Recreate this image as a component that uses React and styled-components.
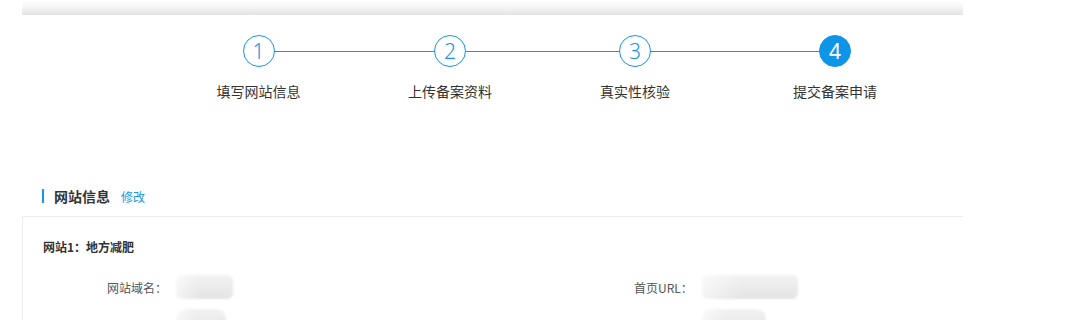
import React from "react"
import styled, { createGlobalStyle } from "styled-components"

const GlobalStyle = createGlobalStyle`
  html, body {
    margin: 0;
    padding: 0;
    background: #ffffff;
    font-family: "Noto Sans CJK SC", "Microsoft YaHei", sans-serif;
    color: #333;
  }
`

const steps = [
  { num: 1, label: "填写网站信息", left: 178.5 },
  { num: 2, label: "上传备案资料", left: 31.5 },
  { num: 3, label: "真实性核验", left: 25 },
  { num: 4, label: "提交备案申请", left: 40, active: true },
]

export default function App() {
  return (
    <>
      <GlobalStyle />
      <Page>
        <TopShade />
        <StepBar>
          <StepLine />
          {steps.map((s) => (
            <Step key={s.num} $left={s.left}>
              <Circle $active={s.active}>{s.num}</Circle>
              <StepLabel>{s.label}</StepLabel>
            </Step>
          ))}
        </StepBar>
        <SectionHead>
          <SectionTitle>网站信息</SectionTitle>
          <EditLink>修改</EditLink>
        </SectionHead>
        <Card>
          <SiteName>网站1：地方减肥</SiteName>
          <FieldRow>
            <Field>
              <FieldLabel>网站域名：</FieldLabel>
              <Masked $w={57} />
            </Field>
            <Field>
              <FieldLabel>首页URL：</FieldLabel>
              <Masked $w={96} />
            </Field>
          </FieldRow>
          <FieldRow $tight>
            <Field>
              <FieldLabel $hidden>网站域名：</FieldLabel>
              <Masked $w={50} $round />
            </Field>
            <Field>
              <FieldLabel $hidden>首页URL：</FieldLabel>
              <Masked $w={64} $round />
            </Field>
          </FieldRow>
        </Card>
      </Page>
    </>
  )
}

const Page = styled.div`
  width: 941px;
  margin-left: 22px;
  height: 320px;
  overflow: hidden;
`

const TopShade = styled.div`
  height: 15px;
  background: linear-gradient(to bottom, #ffffff 0%, #f6f6f6 45%, #e3e3e3 100%);
`

const StepBar = styled.div`
  position: relative;
  display: flex;
  margin-top: 20px;
  margin-left: -22px;
`

const StepLine = styled.div`
  position: absolute;
  top: 16px;
  left: 260px;
  width: 575px;
  height: 1px;
  background: #1596e6;
`

const Step = styled.div`
  position: relative;
  width: 160px;
  margin-left: ${(p) => p.$left}px;
  display: flex;
  flex-direction: column;
  align-items: center;
`

const Circle = styled.div`
  box-sizing: border-box;
  width: 32px;
  height: 32px;
  border-radius: 50%;
  border: 1px solid #1596e6;
  background: ${(p) => (p.$active ? "#0f95e8" : "#ffffff")};
  color: ${(p) => (p.$active ? "#ffffff" : "#1596e6")};
  display: flex;
  align-items: center;
  justify-content: center;
  font-family: "Noto Sans", "DejaVu Sans", sans-serif;
  font-size: 21px;
  font-weight: ${(p) => (p.$active ? 400 : 300)};
  line-height: 1;
`

const StepLabel = styled.div`
  margin-top: 15px;
  font-size: 14px;
  line-height: 18px;
  color: #333;
`

const SectionHead = styled.div`
  display: flex;
  align-items: center;
  gap: 11px;
  margin-top: 88px;
  margin-left: 20px;
  height: 16px;
`

const SectionTitle = styled.div`
  border-left: 2px solid #1596e6;
  padding-left: 10px;
  font-size: 14px;
  line-height: 14px;
  font-weight: 700;
  color: #333;
`

const EditLink = styled.a`
  font-size: 12px;
  color: #1596e6;
  cursor: pointer;
`

const Card = styled.div`
  margin-top: 12px;
  border-top: 1px solid #ececec;
  border-left: 1px solid #ececec;
  padding: 22px 0 0 20px;
  height: 200px;
`

const SiteName = styled.div`
  font-size: 12px;
  line-height: 16px;
  font-weight: 700;
  color: #333;
`

const FieldRow = styled.div`
  display: grid;
  grid-template-columns: 527px 1fr;
  padding-left: 64px;
  margin-top: ${(p) => (p.$tight ? "10px" : "20px")};
`

const Field = styled.div`
  display: flex;
  align-items: center;
  gap: 9px;
`

const FieldLabel = styled.span`
  font-size: 12px;
  color: #555;
  visibility: ${(p) => (p.$hidden ? "hidden" : "visible")};
`

const Masked = styled.div`
  width: ${(p) => p.$w}px;
  height: 24px;
  border-radius: ${(p) => (p.$round ? "10px 10px 0 0" : "6px")};
  background:
    linear-gradient(to right, rgba(255,255,255,0.6) 0%, rgba(255,255,255,0) 40%),
    linear-gradient(to bottom, #f2f2f2 0%, #ebebeb 50%, #e4e4e4 100%);
  filter: blur(1px);
`
